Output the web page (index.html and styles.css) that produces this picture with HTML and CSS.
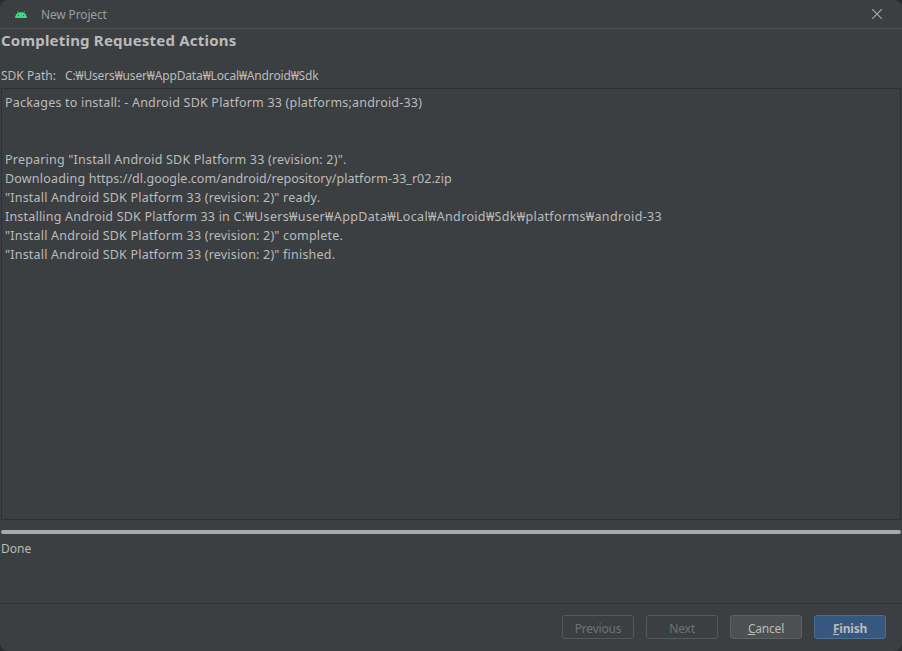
FILE: index.html
```html
<!DOCTYPE html>
<html lang="en">
<head>
<meta charset="utf-8">
<title>New Project</title>
<link rel="stylesheet" href="styles.css">
</head>
<body>
<div class="window">
  <header class="titlebar">
    <svg class="logo" width="12" height="7" viewBox="0 0 12 7" aria-hidden="true">
      <path fill="#3ddc84" d="M0 7C0.2 4.8 1.3 2.9 3 2L2.1 0.4 2.6 0.1 3.6 1.7C5 1.2 7 1.2 8.4 1.7L9.4 0.1 9.9 0.4 9 2C10.7 2.9 11.8 4.8 12 7Z"/>
      <circle cx="3.4" cy="4.6" r=".6" fill="#3c3f41"/>
      <circle cx="8.6" cy="4.6" r=".6" fill="#3c3f41"/>
    </svg>
    <span class="title">New Project</span>
    <svg class="close" width="10" height="10" viewBox="0 0 10 10" aria-hidden="true">
      <path d="M0 0L10 10M10 0L0 10" stroke="#a9a9a9" stroke-width="1.1" fill="none"/>
    </svg>
  </header>
  <main class="content">
    <h1 class="heading">Completing Requested Actions</h1>
    <div class="sdk"><span class="sdk-label">SDK Path:</span><span class="sdk-path">C:₩Users₩user₩AppData₩Local₩Android₩Sdk</span></div>
    <div class="log">
      <div class="line">Packages to install: - Android SDK Platform 33 (platforms;android-33)</div>
      <div class="line"></div>
      <div class="line"></div>
      <div class="line">Preparing "Install Android SDK Platform 33 (revision: 2)".</div>
      <div class="line">Downloading <span class="url">https://dl.google.com/android/repository/platform-33_r02.zip</span></div>
      <div class="line">"Install Android SDK Platform 33 (revision: 2)" ready.</div>
      <div class="line">Installing Android SDK Platform 33 in <span class="path">C:₩Users₩user₩AppData₩Local₩Android₩Sdk₩platforms₩android-33</span></div>
      <div class="line">"Install Android SDK Platform 33 (revision: 2)" complete.</div>
      <div class="line">"Install Android SDK Platform 33 (revision: 2)" finished.</div>
    </div>
    <div class="progress"></div>
    <div class="status">Done</div>
  </main>
  <footer class="footer">
    <button class="btn" disabled>Previous</button>
    <button class="btn" disabled>Next</button>
    <button class="btn cancel"><u>C</u>ancel</button>
    <button class="btn finish"><u>F</u>inish</button>
  </footer>
</div>
</body>
</html>
```
FILE: styles.css
```css
* { box-sizing: border-box; }
html, body { margin: 0; height: 100%; background: #2b2b2b; }
body { font-family: "Noto Sans", "Noto Sans CJK KR", sans-serif; font-size: 12px; color: #bbbbbb; }
.window {
  width: 902px; height: 651px; background: #3c3f41;
  border-radius: 8px; overflow: hidden;
  display: flex; flex-direction: column;
}
.titlebar {
  height: 29px; flex: none; display: flex; align-items: center;
  padding: 0 20px 0 15px; border-bottom: 1px solid #515151;
}
.logo { margin-right: 14px; margin-top: 1px; }
.title { flex: 1; color: #9a9da0; letter-spacing: -0.15px; }
.content { flex: 1; display: flex; flex-direction: column; min-height: 0; padding: 0 1px; }
.heading { margin: 0; height: 24px; font-size: 15px; line-height: 23px; font-weight: 700; color: #bbbbbb; letter-spacing: .2px; }
.sdk { display: flex; margin-top: 13px; height: 19px; line-height: 19px; }
.sdk-label { width: 64px; }
.sdk-path { letter-spacing: -0.15px; }
.log {
  height: 432px; margin-top: 3px; padding: 4px 3px;
  border: 1px solid #2f3133; background: #3c3f41; font-size: 12.5px; letter-spacing: .2px;
}
.line { height: 19px; line-height: 19px; white-space: nowrap; }
.url { letter-spacing: .03px; }
.path { letter-spacing: .34px; }
.progress { height: 4px; margin-top: 10px; background: #a9a9a9; border-radius: 2px; }
.status { margin-top: 5px; line-height: 19px; height: 19px; }
.footer {
  height: 48px; flex: none; display: flex; justify-content: flex-end;
  gap: 12px; padding: 11px 16px 0 0; border-top: 1px solid #323232;
}
.btn {
  width: 72px; height: 24px; padding: 3px 0 0; font: inherit; line-height: 19px;
  border: 1px solid #55585a; border-radius: 3px; background: transparent; color: #6f7274;
  letter-spacing: -0.2px;
}
.cancel { background: #4c5052; border-color: #5e6060; color: #bbbbbb; }
.finish { background: #365880; border-color: #4c708c; color: #bbbbbb; font-weight: 700; }
```
